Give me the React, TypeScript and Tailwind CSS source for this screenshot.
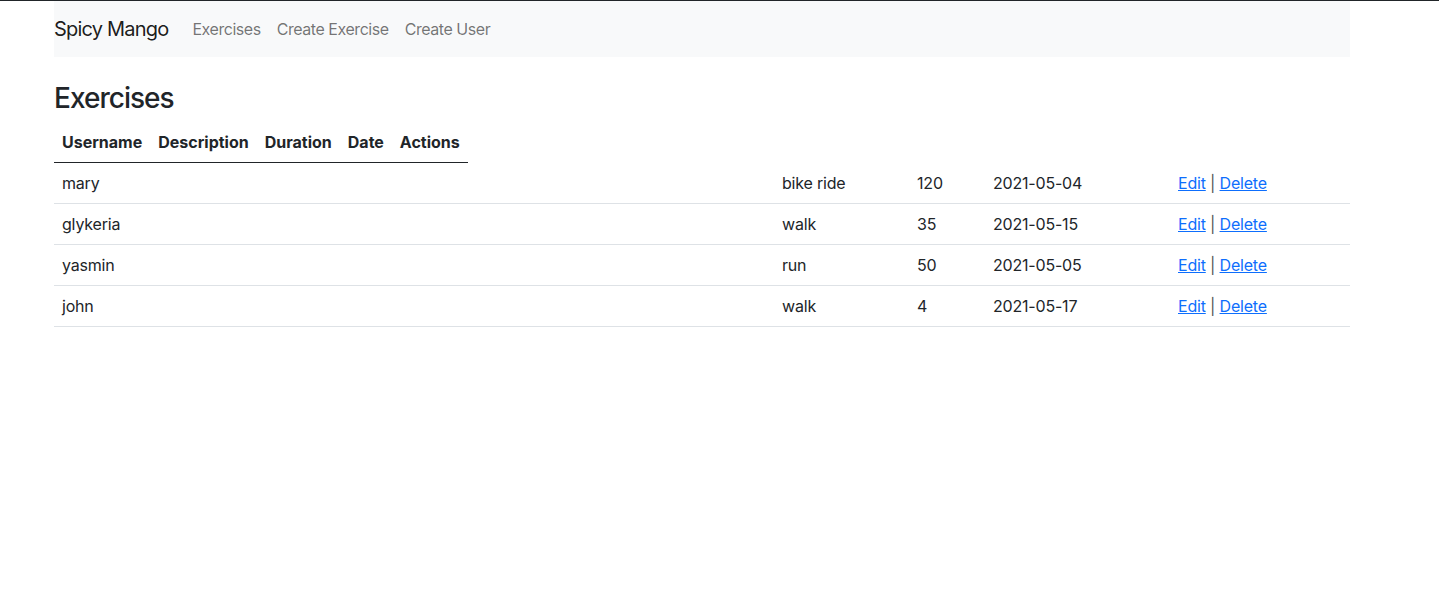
import React from "react";

interface Exercise {
  id: string;
  username: string;
  description: string;
  duration: number;
  date: string;
}

const exercises: Exercise[] = [
  { id: "1", username: "mary", description: "bike ride", duration: 120, date: "2021-05-04" },
  { id: "2", username: "glykeria", description: "walk", duration: 35, date: "2021-05-15" },
  { id: "3", username: "yasmin", description: "run", duration: 50, date: "2021-05-05" },
  { id: "4", username: "john", description: "walk", duration: 4, date: "2021-05-17" },
];

const headers = ["Username", "Description", "Duration", "Date", "Actions"];

function Navbar() {
  return (
    <nav className="flex items-center h-14 bg-[#f8f9fa]">
      <a href="#" className="mr-4 py-[5px] text-[20px] leading-[30px] tracking-[-0.04em] text-black/90">
        Spicy Mango
      </a>
      <ul className="flex">
        {["Exercises", "Create Exercise", "Create User"].map((item) => (
          <li key={item}>
            <a href="#" className="block px-2 py-2 tracking-[-0.028em] text-black/55">
              {item}
            </a>
          </li>
        ))}
      </ul>
    </nav>
  );
}

function ExercisesList() {
  return (
    <div>
      <h3 className="mt-[25px] mb-[6px] text-[28px] leading-[1.2] tracking-[-0.035em] font-medium">Exercises</h3>

      {/* header row sits on its own, only as wide as its cells */}
      <div className="inline-flex border-b border-[#212529] font-bold">
        {headers.map((h) => (
          <div key={h} className="px-2 py-2">
            {h}
          </div>
        ))}
      </div>

      <div className="tracking-[-0.012em]">
        {exercises.map((ex) => (
          <div
            key={ex.id}
            className="grid grid-cols-[720px_135px_76px_185px_180px] border-b border-[#dee2e6]"
          >
            <div className="px-2 py-2">{ex.username}</div>
            <div className="px-2 py-2">{ex.description}</div>
            <div className="px-2 py-2">{ex.duration}</div>
            <div className="px-2 py-2">{ex.date}</div>
            <div className="px-2 py-2">
              <a href="#" className="text-[#0d6efd] underline">Edit</a>{" "}
              <span className="text-[#555]">|</span>{" "}
              <a href="#" className="text-[#0d6efd] underline">Delete</a>
            </div>
          </div>
        ))}
      </div>
    </div>
  );
}

export default function App() {
  return (
    <div
      className="min-h-screen bg-white text-[#212529] text-base leading-6 border-t border-[#212529]"
      style={{ fontFamily: "Inter, 'Noto Sans', sans-serif" }}
    >
      <div className="w-[1296px] ml-[54px]">
        <Navbar />
        <ExercisesList />
      </div>
    </div>
  );
}
